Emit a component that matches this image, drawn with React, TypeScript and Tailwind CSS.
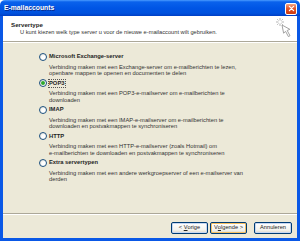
import type { ReactNode } from 'react'

interface Option {
  label: string
  lines: string[]
  checked?: boolean
}

const options: Option[] = [
  {
    label: 'Microsoft Exchange-server',
    lines: [
      'Verbinding maken met een Exchange-server om e-mailberichten te lezen,',
      'openbare mappen te openen en documenten te delen',
    ],
  },
  {
    label: 'POP3',
    checked: true,
    lines: ['Verbinding maken met een POP3-e-mailserver om e-mailberichten te', 'downloaden'],
  },
  {
    label: 'IMAP',
    lines: [
      'Verbinding maken met een IMAP-e-mailserver om e-mailberichten te',
      'downloaden en postvakmappen te synchroniseren',
    ],
  },
  {
    label: 'HTTP',
    lines: [
      'Verbinding maken met een HTTP-e-mailserver (zoals Hotmail) om',
      'e-mailberichten te downloaden en postvakmappen te synchroniseren',
    ],
  },
  {
    label: 'Extra servertypen',
    lines: ['Verbinding maken met een andere werkgroepserver of een e-mailserver van', 'derden'],
  },
]

function Radio({ checked }: { checked?: boolean }) {
  return (
    <span className="w-[8px] h-[8px] shrink-0 rounded-full border border-[#1c5180] bg-[radial-gradient(circle_at_65%_65%,#ffffff_35%,#d8d6cc_100%)] flex items-center justify-center">
      {checked && <span className="w-[3.5px] h-[3.5px] rounded-full bg-[#2ea82e]" />}
    </span>
  )
}

function XpButton({ children, focused, className }: { children: ReactNode; focused?: boolean; className?: string }) {
  return (
    <div
      className={
        'h-[12px] rounded-[2px] border border-[#003c74] bg-[linear-gradient(180deg,#ffffff,#f3f3ee_70%,#d9d4c8)] flex items-center justify-center text-[5.7px] leading-none text-[#222222] whitespace-pre ' +
        (focused ? 'shadow-[inset_0_0_0_1px_#f6c063] ' : 'shadow-[inset_0_0_0_1px_#c6d7f2] ') +
        (className ?? '')
      }
    >
      {children}
    </div>
  )
}

function WizardIcon() {
  return (
    <svg viewBox="0 0 16 21" className="w-[16px] h-[21px]">
      <path
        d="M4 0V2.5M4 5.5V8M0 4H2.5M5.5 4H8M1.2 1.2L2.5 2.5M5.5 5.5L6.8 6.8M6.8 1.2L5.5 2.5M1.2 6.8L2.5 5.5"
        stroke="#a2a2a2"
        strokeWidth="0.8"
      />
      <path
        d="M6 7L7.6 15.2L9.6 13.4L12.4 18.6L14 17.7L11.2 12.5L13.8 11.3Z"
        fill="#ffffff"
        stroke="#8c8c8c"
        strokeWidth="0.8"
        strokeLinejoin="round"
      />
    </svg>
  )
}

export default function App() {
  return (
    <div className="w-[300px] h-[241px] flex flex-col font-['Liberation_Sans',Arial,sans-serif] text-[#1e1e1e] bg-white">
      {/* ── Title bar ── */}
      <div className="h-[16px] shrink-0 rounded-t-[5px] bg-[linear-gradient(180deg,#4a9bff_0%,#0a62ec_12%,#0055e5_50%,#0052de_82%,#003fc4_100%)] flex items-center pl-[4px] pr-[3px]">
        <span className="flex-1 text-white font-bold text-[6.8px] leading-none [text-shadow:1px_1px_0_#0a2a8a]">
          E-mailaccounts
        </span>
        <div className="w-[12px] h-[12px] mt-[1px] rounded-[2px] border border-white bg-[linear-gradient(180deg,#f4a586,#e2562b_45%,#cc3a10)] flex items-center justify-center">
          <svg viewBox="0 0 10 10" className="w-[7px] h-[7px]">
            <path d="M2 2L8 8M8 2L2 8" stroke="#ffffff" strokeWidth="1.8" strokeLinecap="round" />
          </svg>
        </div>
      </div>

      {/* ── Window body ── */}
      <div className="flex-1 flex flex-col border-x-[3px] border-b-[3px] border-[#0a58e6] bg-[#ece9d8]">
        {/* Header */}
        <div className="h-[25px] shrink-0 bg-white flex items-start pr-[5px]">
          <div className="flex-1 pt-[5px]">
            <div className="pl-[8px] font-bold text-[6.2px] leading-[7px]">Servertype</div>
            <div className="pl-[17px] mt-[1px] text-[5.7px] leading-[7px] whitespace-nowrap text-[#333333]">
              U kunt kiezen welk type server u voor de nieuwe e-mailaccount wilt gebruiken.
            </div>
          </div>
          <div className="mt-[2px]">
            <WizardIcon />
          </div>
        </div>
        <div className="h-px bg-[#aca899]" />
        <div className="h-px bg-white" />

        {/* Options */}
        <div className="flex-1 pl-[36px] pt-[8.5px] flex flex-col gap-[1.8px]">
          {options.map(o => (
            <div key={o.label}>
              <div className="h-[10px] flex items-center">
                <Radio checked={o.checked} />
                <span
                  className={
                    'ml-[1.5px] px-[0.5px] font-bold text-[5.8px] leading-[7px] whitespace-nowrap ' +
                    (o.checked ? 'outline-1 outline-dotted outline-[#555555]' : '')
                  }
                >
                  {o.label}
                </span>
              </div>
              <div className="pl-[10px] mt-[2px] text-[5.75px] leading-[6.4px] whitespace-nowrap text-[#333333]">
                {o.lines.map(l => (
                  <div key={l}>{l}</div>
                ))}
              </div>
            </div>
          ))}
        </div>

        <div className="h-px bg-[#aca899]" />
        <div className="h-px bg-white" />

        {/* Buttons */}
        <div className="h-[23px] shrink-0 flex items-start justify-end pt-[7px] pr-[5px]">
          <XpButton className="w-[37px]">
            {'< '}
            <u>V</u>orige
          </XpButton>
          <XpButton focused className="w-[37px] ml-[2px]">
            V<u>o</u>lgende{' >'}
          </XpButton>
          <XpButton className="w-[38px] ml-[7px]">Annuleren</XpButton>
        </div>
      </div>
    </div>
  )
}
